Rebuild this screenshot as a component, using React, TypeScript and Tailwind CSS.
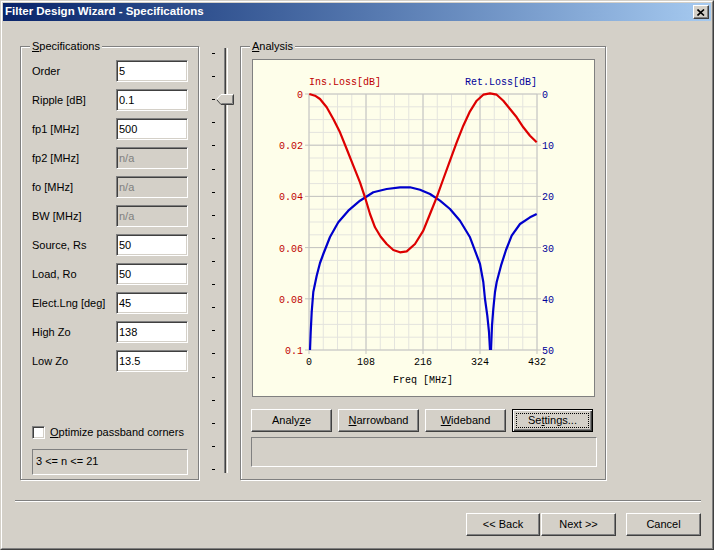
import type { ReactNode } from 'react';

const SANS = "font-['Liberation_Sans',Arial,sans-serif]";

// curve points, page coordinates
const insLoss: [number, number][] = [
  [309.3, 95], [315, 96.7], [320, 100], [326.7, 108.3], [333.3, 120], [340, 133.3], [346.7, 150],
  [353.3, 166.7], [360, 183.3], [365, 198.3], [370, 215], [375, 228.3], [380.7, 237.7], [386.7, 245],
  [393.3, 251], [400, 253.3], [406.7, 252.3], [415, 245], [423.3, 231.7], [430, 215], [436.7, 198.3],
  [443.3, 180], [450, 161.7], [456.7, 143.3], [463.3, 126.7], [470, 112.3], [476.7, 101.7],
  [483.3, 95.7], [490, 94.3], [496.7, 95.7], [503.3, 101.7], [510, 110], [516.7, 118.3],
  [523.3, 128.3], [530, 136.7], [536.7, 143.3]
];

const retLossA: [number, number][] = [
  [310, 351], [310.7, 333], [311.7, 313], [313.3, 293], [316.7, 276.7], [320, 264], [323.3, 255],
  [330, 238], [338.3, 223.3], [348.3, 211.7], [360, 201.7], [373.3, 193.3], [386.7, 190], [400, 188.3],
  [410, 188.3], [420, 190.7], [430, 195], [440, 201.7], [450, 210], [460, 221.7], [470, 238.3],
  [480, 265], [483.3, 283], [485, 300], [487.3, 316.7], [489, 333], [490, 351]
];

const retLossB: [number, number][] = [
  [491, 351], [492, 326.7], [493.3, 310], [495, 293], [496.7, 283], [501, 266.7], [506, 251],
  [511.7, 236.7], [520, 225], [530, 218.3], [536.7, 215]
];

const pts = (a: [number, number][]) => a.map((p) => p.join(',')).join(' ');

const X0 = 309;
const X1 = 537;
const Y0 = 95;
const Y1 = 351;

function Chart() {
  const minorX = Array.from({ length: 17 }, (_, i) => X0 + ((X1 - X0) / 16) * i);
  const minorY = Array.from({ length: 21 }, (_, i) => Y0 + ((Y1 - Y0) / 20) * i);
  const majorX = [0, 1, 2, 3, 4].map((i) => X0 + ((X1 - X0) / 4) * i);
  const majorY = [0, 1, 2, 3, 4, 5].map((i) => Y0 + ((Y1 - Y0) / 5) * i);
  const leftLabels = ['0', '0.02', '0.04', '0.06', '0.08', '0.1'];
  const rightLabels = ['0', '10', '20', '30', '40', '50'];
  const xLabels = ['0', '108', '216', '324', '432'];

  return (
    <svg width="341" height="336" viewBox="253 61 341 336" className="block">
      {minorX.map((x) => (
        <line key={'mx' + x} x1={x} y1={Y0} x2={x} y2={Y1} stroke="#e4e4de" strokeWidth="1" />
      ))}
      {minorY.map((y) => (
        <line key={'my' + y} x1={X0} y1={y} x2={X1} y2={y} stroke="#e4e4de" strokeWidth="1" />
      ))}
      {majorX.map((x) => (
        <line key={'Mx' + x} x1={x} y1={Y0} x2={x} y2={Y1 + 4} stroke="#c4c4c0" strokeWidth="1" />
      ))}
      {majorY.map((y) => (
        <line key={'My' + y} x1={X0 - 4} y1={y} x2={X1 + 4} y2={y} stroke="#c4c4c0" strokeWidth="1" />
      ))}

      <polyline points={pts(retLossA)} fill="none" stroke="#0000cc" strokeWidth="2.2" strokeLinejoin="round" />
      <polyline points={pts(retLossB)} fill="none" stroke="#0000cc" strokeWidth="2.2" strokeLinejoin="round" />
      <polyline points={pts(insLoss)} fill="none" stroke="#dd0000" strokeWidth="2.2" strokeLinejoin="round" />

      <g fontFamily="'Liberation Mono', 'DejaVu Sans Mono', monospace" fontSize="10">
        <text x={X0} y={86} fill="#c00000">Ins.Loss[dB]</text>
        <text x={X1} y={86} fill="#000099" textAnchor="end">Ret.Loss[dB]</text>
        {leftLabels.map((t, i) => (
          <text key={'l' + t} x={303} y={majorY[i] + 4} fill="#c00000" textAnchor="end">
            {t}
          </text>
        ))}
        {rightLabels.map((t, i) => (
          <text key={'r' + t} x={542} y={majorY[i] + 4} fill="#000099">
            {t}
          </text>
        ))}
        {xLabels.map((t, i) => (
          <text key={'x' + t} x={majorX[i]} y={366} fill="#000" textAnchor="middle">
            {t}
          </text>
        ))}
        <text x={423} y={384} fill="#000" textAnchor="middle">Freq [MHz]</text>
      </g>
    </svg>
  );
}

function Edit({ value, disabled }: { value: string; disabled?: boolean }) {
  return (
    <div
      className={`flex h-[22px] w-[72px] items-center border border-t-[#808080] border-l-[#808080] border-r-white border-b-white pl-[2px] shadow-[inset_1px_1px_0_#404040,inset_-1px_-1px_0_#d4d0c8] ${
        disabled ? 'bg-[#d4d0c8] text-[#808080]' : 'bg-white text-black'
      }`}
    >
      {value}
    </div>
  );
}

function Btn({ children, className = '', isDefault }: { children: ReactNode; className?: string; isDefault?: boolean }) {
  return (
    <button
      type="button"
      className={`relative flex h-[23px] items-center justify-center text-[11px] text-black ${
        isDefault
          ? 'border border-black shadow-[inset_1px_1px_0_#fff,inset_-1px_-1px_0_#404040,inset_-2px_-2px_0_#808080]'
          : 'border border-t-white border-l-white border-r-[#404040] border-b-[#404040] shadow-[inset_-1px_-1px_0_#808080]'
      } ${className}`}
    >
      {isDefault ? <span className="absolute inset-[3px] border border-dotted border-black" /> : null}
      <span className="relative">{children}</span>
    </button>
  );
}

function GroupBox({ caption, className, children }: { caption: ReactNode; className: string; children: ReactNode }) {
  return (
    <div className={`relative border border-[#808080] shadow-[inset_1px_1px_0_#fff,1px_1px_0_#fff] ${className}`}>
      <span className="absolute left-[9px] top-[-8px] bg-[#d4d0c8] px-[2px] leading-[14px]">{caption}</span>
      {children}
    </div>
  );
}

const specs: { label: string; value: string; disabled?: boolean }[] = [
  { label: 'Order', value: '5' },
  { label: 'Ripple [dB]', value: '0.1' },
  { label: 'fp1 [MHz]', value: '500' },
  { label: 'fp2 [MHz]', value: 'n/a', disabled: true },
  { label: 'fo [MHz]', value: 'n/a', disabled: true },
  { label: 'BW [MHz]', value: 'n/a', disabled: true },
  { label: 'Source, Rs', value: '50' },
  { label: 'Load, Ro', value: '50' },
  { label: 'Elect.Lng [deg]', value: '45' },
  { label: 'High Zo', value: '138' },
  { label: 'Low Zo', value: '13.5' }
];

export default function App() {
  return (
    <div
      className={`h-[550px] w-[714px] overflow-hidden border border-t-[#d4d0c8] border-l-[#d4d0c8] border-r-[#404040] border-b-[#404040] bg-[#d4d0c8] text-[11px] text-black ${SANS}`}
    >
      <div className="h-full border border-t-white border-l-white border-r-[#808080] border-b-[#808080] p-px">
        {/* title bar */}
        <div className="flex h-[18px] items-center justify-between bg-gradient-to-r from-[#0a246a] to-[#a6caf0] pl-[2px] pr-[2px]">
          <span className="text-[11.5px] font-bold text-white">Filter Design Wizard - Specifications</span>
          <div className="flex h-[14px] w-[16px] items-center justify-center border border-t-white border-l-white border-r-[#404040] border-b-[#404040] bg-[#d4d0c8] shadow-[inset_-1px_-1px_0_#808080]">
            <svg width="8" height="7" viewBox="0 0 8 7">
              <path d="M0.5 0.5 L7 6.5 M7 0.5 L0.5 6.5" stroke="#000" strokeWidth="1.6" />
            </svg>
          </div>
        </div>

        {/* main area */}
        <div className="flex pl-[17px] pt-[25px]">
          <GroupBox caption={<><span className="underline">S</span>pecifications</>} className="h-[434px] w-[179px]">
            <div className="flex flex-col pl-[11px] pt-[13px]">
              <div className="flex flex-col gap-[7px]">
                {specs.map((s) => (
                  <div key={s.label} className="flex h-[22px] items-center">
                    <span className="w-[84px]">{s.label}</span>
                    <Edit value={s.value} disabled={s.disabled} />
                  </div>
                ))}
              </div>
              <div className="mt-[52px] flex items-center gap-[5px]">
                <div className="h-[13px] w-[13px] border border-t-[#808080] border-l-[#808080] border-r-white border-b-white bg-white shadow-[inset_1px_1px_0_#404040,inset_-1px_-1px_0_#d4d0c8]" />
                <span>
                  <span className="underline">O</span>ptimize passband corners
                </span>
              </div>
              <div className="mt-[8px] flex h-[26px] w-[156px] items-center border border-t-[#808080] border-l-[#808080] border-r-white border-b-white pl-[3px]">
                3 &lt;= n &lt;= 21
              </div>
            </div>
          </GroupBox>

          {/* slider */}
          <div className="relative flex h-[434px] w-[41px]">
            <div className="ml-[13px] mt-[7px] flex h-[417px] w-[3px] flex-col justify-between">
              {Array.from({ length: 19 }, (_, i) => (
                <div key={i} className="h-px w-[3px] bg-black" />
              ))}
            </div>
            <div className="ml-[9px] mt-[2px] h-[425px] w-[4px] border-l border-r border-l-[#808080] border-r-white bg-[#d4d0c8] shadow-[inset_1px_0_0_#404040]" />
            <svg className="absolute left-[17px] top-[48px]" width="18" height="11" viewBox="0 0 18 11">
              <path d="M5 0.5 L17.5 0.5 L17.5 10.5 L5 10.5 L0.5 5.5 Z" fill="#d4d0c8" />
              <path d="M0.5 5.5 L5 0.5 L17 0.5" fill="none" stroke="#fff" strokeWidth="1" />
              <path d="M17.5 0.5 L17.5 10.5 L5 10.5 L0.8 5.8" fill="none" stroke="#404040" strokeWidth="1" />
              <path d="M16.5 1.5 L16.5 9.5 L5.4 9.5" fill="none" stroke="#808080" strokeWidth="1" />
            </svg>
          </div>

          <GroupBox caption={<><span className="underline">A</span>nalysis</>} className="h-[434px] w-[366px]">
            <div className="flex flex-col pl-[11px] pt-[12px]">
              <div className="h-[338px] w-[343px] border border-[#808080] bg-[#fefeea]">
                <Chart />
              </div>
              <div className="-ml-px mt-[12px] flex gap-[6px]">
                <Btn className="w-[81px]">
                  Analy<span className="underline">z</span>e
                </Btn>
                <Btn className="w-[81px]">
                  <span className="underline">N</span>arrowband
                </Btn>
                <Btn className="w-[81px]">
                  <span className="underline">W</span>ideband
                </Btn>
                <Btn className="w-[81px]" isDefault>
                  Se<span className="underline">t</span>tings...
                </Btn>
              </div>
              <div className="-ml-px mt-[5px] h-[30px] w-[346px] border border-t-[#808080] border-l-[#808080] border-r-white border-b-white" />
            </div>
          </GroupBox>
        </div>

        {/* separator */}
        <div className="ml-[12px] mt-[20px] h-[2px] w-[686px] border-t border-b border-t-[#808080] border-b-white" />

        {/* wizard buttons */}
        <div className="mt-[11px] flex justify-end pr-[10px]">
          <Btn className="w-[74px]">&lt;&lt; Back</Btn>
          <Btn className="ml-px w-[75px]">Next &gt;&gt;</Btn>
          <Btn className="ml-[10px] w-[75px]">Cancel</Btn>
        </div>
      </div>
    </div>
  );
}
